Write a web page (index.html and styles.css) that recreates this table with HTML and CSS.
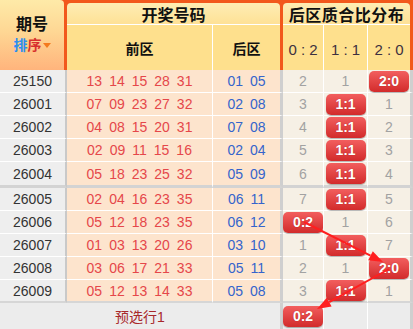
FILE: index.html
```html
<!DOCTYPE html>
<html lang="zh">
<head>
<meta charset="utf-8">
<link rel="stylesheet" href="styles.css">
</head>
<body>
<div class="page">
  <div class="hdr">
    <div class="h-qh">
      <div class="t1">期号</div>
      <div class="t2"><span class="pai">排</span><span class="xu">序</span><span class="tri"></span></div>
    </div>
    <div class="h-mid">
      <div class="h-top">开奖号码</div>
      <div class="h-bot">
        <div class="hc hc-f">前区</div>
        <div class="hc hc-b">后区</div>
      </div>
    </div>
    <div class="h-dist">
      <div class="h-top wide">后区质合比分布</div>
      <div class="h-bot">
        <div class="hc hd hd1">0 : 2</div>
        <div class="hc hd hd2">1 : 1</div>
        <div class="hc hd hd3">2 : 0</div>
      </div>
    </div>
  </div>

  <div class="rows">
    <div class="row">
      <div class="c qh">25150</div>
      <div class="c f"><span>13</span><span>14</span><span>15</span><span>28</span><span>31</span></div>
      <div class="c b"><span>01</span><span>05</span></div>
      <div class="c d">2</div><div class="c d">1</div><div class="c d d3"><span class="bd">2:0</span></div>
    </div>
    <div class="row">
      <div class="c qh">26001</div>
      <div class="c f"><span>07</span><span>09</span><span>23</span><span>27</span><span>32</span></div>
      <div class="c b"><span>02</span><span>08</span></div>
      <div class="c d">3</div><div class="c d"><span class="bd">1:1</span></div><div class="c d d3">1</div>
    </div>
    <div class="row">
      <div class="c qh">26002</div>
      <div class="c f"><span>04</span><span>08</span><span>15</span><span>20</span><span>31</span></div>
      <div class="c b"><span>07</span><span>08</span></div>
      <div class="c d">4</div><div class="c d"><span class="bd">1:1</span></div><div class="c d d3">2</div>
    </div>
    <div class="row">
      <div class="c qh">26003</div>
      <div class="c f"><span>02</span><span>09</span><span>11</span><span>15</span><span>16</span></div>
      <div class="c b"><span>02</span><span>04</span></div>
      <div class="c d">5</div><div class="c d"><span class="bd">1:1</span></div><div class="c d d3">3</div>
    </div>
    <div class="row sep">
      <div class="c qh">26004</div>
      <div class="c f"><span>05</span><span>18</span><span>23</span><span>25</span><span>32</span></div>
      <div class="c b"><span>05</span><span>09</span></div>
      <div class="c d">6</div><div class="c d"><span class="bd">1:1</span></div><div class="c d d3">4</div>
    </div>
    <div class="row">
      <div class="c qh">26005</div>
      <div class="c f"><span>02</span><span>04</span><span>16</span><span>23</span><span>35</span></div>
      <div class="c b"><span>06</span><span>11</span></div>
      <div class="c d">7</div><div class="c d"><span class="bd">1:1</span></div><div class="c d d3">5</div>
    </div>
    <div class="row">
      <div class="c qh">26006</div>
      <div class="c f"><span>05</span><span>12</span><span>18</span><span>23</span><span>35</span></div>
      <div class="c b"><span>06</span><span>12</span></div>
      <div class="c d"><span class="bd">0:2</span></div><div class="c d">1</div><div class="c d d3">6</div>
    </div>
    <div class="row">
      <div class="c qh">26007</div>
      <div class="c f"><span>01</span><span>03</span><span>13</span><span>20</span><span>26</span></div>
      <div class="c b"><span>03</span><span>10</span></div>
      <div class="c d">1</div><div class="c d"><span class="bd">1:1</span></div><div class="c d d3">7</div>
    </div>
    <div class="row">
      <div class="c qh">26008</div>
      <div class="c f"><span>03</span><span>06</span><span>17</span><span>21</span><span>33</span></div>
      <div class="c b"><span>05</span><span>11</span></div>
      <div class="c d">2</div><div class="c d">1</div><div class="c d d3"><span class="bd">2:0</span></div>
    </div>
    <div class="row last">
      <div class="c qh">26009</div>
      <div class="c f"><span>05</span><span>12</span><span>13</span><span>14</span><span>33</span></div>
      <div class="c b"><span>05</span><span>08</span></div>
      <div class="c d">3</div><div class="c d"><span class="bd">1:1</span></div><div class="c d d3">1</div>
    </div>
    <div class="foot">
      <div class="fc fmain">预选行1</div>
      <div class="fc fd"><span class="bd">0:2</span></div>
      <div class="fc fd"></div>
      <div class="fc fd fd3"></div>
    </div>
  </div>

  <svg class="arrows" width="413" height="329" viewBox="0 0 413 329">
    <line x1="304" y1="222" x2="370.5" y2="255.7" stroke="#ff1f1f" stroke-width="2"/>
    <polygon points="383,262 368.2,260.2 372.8,251.2" fill="#ff1f1f"/>
    <line x1="389" y1="269" x2="329.2" y2="302.2" stroke="#ff1f1f" stroke-width="2"/>
    <polygon points="317,309 326.8,297.8 331.6,306.6" fill="#ff1f1f"/>
  </svg>
</div>
</body>
</html>
```

FILE: styles.css
```css
html, body {
  margin: 0;
  padding: 0;
  background: #fff;
}
body {
  font-family: "Liberation Sans", Arial, "Noto Sans CJK SC", sans-serif;
  font-size: 14px;
  color: #333;
}
.page {
  position: relative;
  width: 413px;
  height: 329px;
  overflow: hidden;
}

/* header */
.hdr {
  display: flex;
  height: 70px;
  background: #f2581c;
}
.h-qh {
  width: 64px;
  margin-right: 3px;
  height: 70px;
  border-top-right-radius: 4px;
  background: linear-gradient(#feeaa8 0%, #fed794 45%, #ffb47c 100%);
  display: flex;
  flex-direction: column;
  align-items: center;
  padding-top: 14px;
  box-sizing: border-box;
}
.t1 {
  font-size: 16px;
  font-weight: bold;
  color: #111;
  line-height: 22px;
}
.t2 {
  font-size: 14px;
  font-weight: bold;
  line-height: 18px;
  display: flex;
  align-items: center;
}
.pai { color: #2b8ef0; }
.xu { color: #d8302e; }
.tri {
  width: 0;
  height: 0;
  border-left: 4px solid transparent;
  border-right: 4px solid transparent;
  border-top: 5px solid #f47a1e;
  margin-left: 1px;
}
.h-mid {
  width: 213px;
  margin-top: 3px;
  margin-right: 3px;
  border-radius: 4px 4px 0 0;
  overflow: hidden;
  display: flex;
  flex-direction: column;
}
.h-dist {
  width: 127px;
  margin-top: 3px;
  border-radius: 4px 4px 0 0;
  overflow: hidden;
  display: flex;
  flex-direction: column;
}
.h-top {
  height: 22px;
  box-sizing: border-box;
  border-bottom: 1px solid #fff;
  background: linear-gradient(#feedb4, #fee196);
  display: flex;
  align-items: center;
  justify-content: center;
  font-size: 16px;
  font-weight: bold;
  color: #111;
}
.h-top.wide {
  letter-spacing: 0.5px;
}
.h-bot {
  flex: 1;
  display: flex;
  background: #fee08d;
}
.hc {
  display: flex;
  align-items: center;
  justify-content: center;
  box-sizing: border-box;
  font-weight: bold;
  font-size: 14px;
  color: #111;
  padding-top: 1px;
}
.hc-f { width: 146px; border-right: 1px solid #fff; }
.hc-b { width: 67px; }
.hd {
  font-weight: normal;
  font-size: 15px;
  color: #3d3040;
  padding-top: 4px;
}
.hd1 { width: 41px; border-right: 1px solid #fff; }
.hd2 { width: 44px; border-right: 1px solid #fff; }
.hd3 { width: 42px; }

/* body rows */
.row {
  display: grid;
  grid-template-columns: 67px 146px 70px 41px 44px 45px;
  height: 23px;
}
.row.sep { height: 26px; }
.c {
  display: flex;
  align-items: center;
  justify-content: center;
  box-sizing: border-box;
  border-bottom: 1px solid #fff;
}
.row.sep .c { border-bottom: 3px solid #d3d3d3; }
.row.last .c { border-bottom: 2px solid #d6d6d6; }
.qh {
  background: #eeeeee;
  border-right: 2px solid #c9c9c9;
  color: #333;
}
.f {
  background: #fde4cd;
  border-right: 1px solid #fff;
  color: #e5474a;
}
.b {
  background: #fde4cd;
  border-right: 3px solid #cfcfcf;
  color: #3564cc;
}
.f span, .b span {
  margin: 0 3.5px;
}
.d {
  background: #f6f0e5;
  border-right: 1px solid #fff;
  color: #a2a2a2;
}
.d3 { border-right: 3px solid #cfcfcf; }

.bd {
  width: 40px;
  height: 21px;
  border-radius: 5px;
  background: linear-gradient(#f25e5e, #d22b2b);
  color: #fff;
  font-weight: bold;
  font-size: 14px;
  display: flex;
  align-items: center;
  justify-content: center;
  box-shadow: 0 1px 1px rgba(0, 0, 0, 0.3);
  text-shadow: 0 0 1px rgba(120, 0, 0, 0.5);
  flex: none;
}

/* footer */
.foot {
  display: grid;
  grid-template-columns: 283px 41px 44px 45px;
  height: 26px;
  background: #ececec;
}
.fc {
  display: flex;
  align-items: center;
  justify-content: center;
  box-sizing: border-box;
}
.fmain {
  border-right: 3px solid #cfcfcf;
  color: #a8282a;
}
.fd { border-right: 1px solid #fff; }
.fd3 { border-right: 3px solid #cfcfcf; }

.arrows {
  position: absolute;
  left: 0;
  top: 0;
  pointer-events: none;
}
```
